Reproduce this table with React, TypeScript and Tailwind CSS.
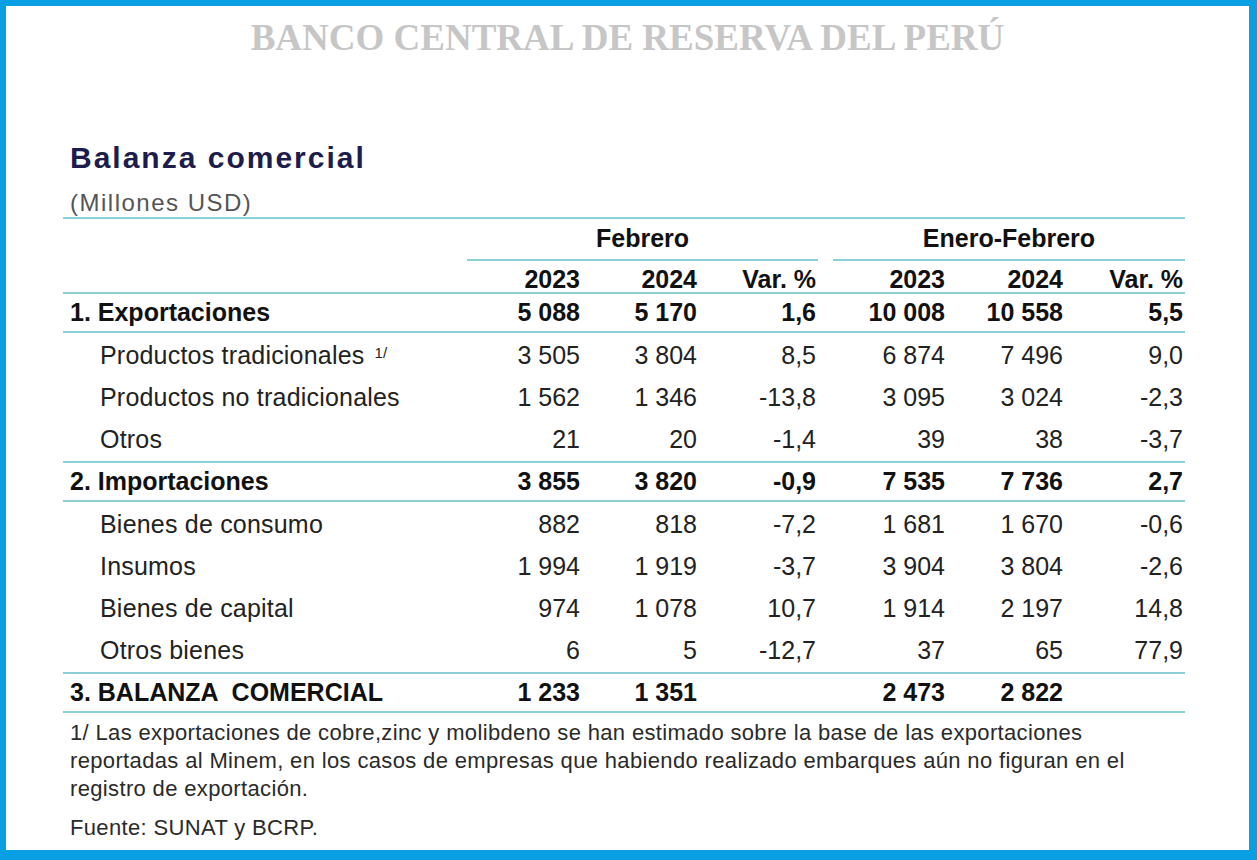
import React from 'react';

const cols = 'grid grid-cols-[404px_115px_117px_119px_15px_114px_118px_120px]';
const line = 'border-b-2 border-[#8ad0d4]';

type Row = { label: string; sup?: string; v: string[] };

const exportRows: Row[] = [
  { label: 'Productos tradicionales', sup: '1/', v: ['3 505', '3 804', '8,5', '6 874', '7 496', '9,0'] },
  { label: 'Productos no tradicionales', v: ['1 562', '1 346', '-13,8', '3 095', '3 024', '-2,3'] },
  { label: 'Otros', v: ['21', '20', '-1,4', '39', '38', '-3,7'] },
];

const importRows: Row[] = [
  { label: 'Bienes de consumo', v: ['882', '818', '-7,2', '1 681', '1 670', '-0,6'] },
  { label: 'Insumos', v: ['1 994', '1 919', '-3,7', '3 904', '3 804', '-2,6'] },
  { label: 'Bienes de capital', v: ['974', '1 078', '10,7', '1 914', '2 197', '14,8'] },
  { label: 'Otros bienes', v: ['6', '5', '-12,7', '37', '65', '77,9'] },
];

function Values({ v, bold }: { v: string[]; bold?: boolean }) {
  const cell = bold ? 'text-right pr-[2px] font-bold text-[#111]' : 'text-right pr-[2px] text-[#222]';
  return (
    <>
      <div className={cell}>{v[0]}</div>
      <div className={cell}>{v[1]}</div>
      <div className={cell}>{v[2]}</div>
      <div />
      <div className={cell}>{v[3]}</div>
      <div className={cell}>{v[4]}</div>
      <div className={cell}>{v[5]}</div>
    </>
  );
}

function TotalRow({ label, v }: { label: string; v: string[] }) {
  return (
    <div className={`${cols} ${line} h-[39px] items-center`}>
      <div className="pl-[7px] font-bold text-[#111] whitespace-pre">{label}</div>
      <Values v={v} bold />
    </div>
  );
}

function SubRows({ rows }: { rows: Row[] }) {
  return (
    <div className={`${line} pt-[2px]`}>
      {rows.map((r) => (
        <div key={r.label} className={`${cols} h-[42px] items-center`}>
          <div className="pl-[37px] text-[#222] tracking-[0.2px]">
            {r.label}
            {r.sup && <sup className="ml-[10px] text-[15px] relative top-[-6px]">{r.sup}</sup>}
          </div>
          <Values v={r.v} />
        </div>
      ))}
    </div>
  );
}

export default function App() {
  return (
    <div className="w-[1257px] h-[860px] bg-white border-[#0a9fe2] border-t-[6px] border-l-[6px] border-r-[8px] border-b-[10px] font-['Liberation_Sans',Arial,sans-serif]">
      <h1 className="h-[64px] flex items-center justify-center font-['Liberation_Serif','Times_New_Roman',serif] font-bold text-[37px] text-[#c6c6c6]">
        BANCO CENTRAL DE RESERVA DEL PERÚ
      </h1>

      <div className="pl-[57px] w-[1179px]">
        <div className="mt-[70px] h-[34px] flex items-center pl-[7px] text-[30px] tracking-[2px] font-bold text-[#1d1d4d]">
          Balanza comercial
        </div>
        <div className={`mt-[15px] h-[30px] flex items-center pl-[7px] text-[24px] text-[#555] tracking-[1.5px] ${line}`}>
          (Millones USD)
        </div>

        {/* table */}
        <div className="text-[25px]">
          <div className={`${cols} h-[42px]`}>
            <div />
            <div className={`col-span-3 ${line} flex items-center justify-center font-bold text-[#111]`}>Febrero</div>
            <div />
            <div className={`col-span-3 ${line} flex items-center justify-center font-bold text-[#111]`}>Enero-Febrero</div>
          </div>
          <div className={`${cols} ${line} h-[33px] items-center`}>
            <div />
            <Values v={['2023', '2024', 'Var. %', '2023', '2024', 'Var. %']} bold />
          </div>

          <TotalRow label="1. Exportaciones" v={['5 088', '5 170', '1,6', '10 008', '10 558', '5,5']} />
          <SubRows rows={exportRows} />
          <TotalRow label="2. Importaciones" v={['3 855', '3 820', '-0,9', '7 535', '7 736', '2,7']} />
          <SubRows rows={importRows} />
          <TotalRow label="3. BALANZA  COMERCIAL" v={['1 233', '1 351', '', '2 473', '2 822', '']} />
        </div>

        <div className="pl-[7px] pt-[6px] text-[22px] tracking-[0.35px] leading-[28px] text-[#2a2a2a]">
          <p>
            1/ Las exportaciones de cobre,zinc y molibdeno se han estimado sobre la base de las exportaciones
            <br />
            reportadas al Minem, en los casos de empresas que habiendo realizado embarques aún no figuran en el
            <br />
            registro de exportación.
          </p>
          <p className="mt-[11px]">Fuente: SUNAT y BCRP.</p>
        </div>
      </div>
    </div>
  );
}
